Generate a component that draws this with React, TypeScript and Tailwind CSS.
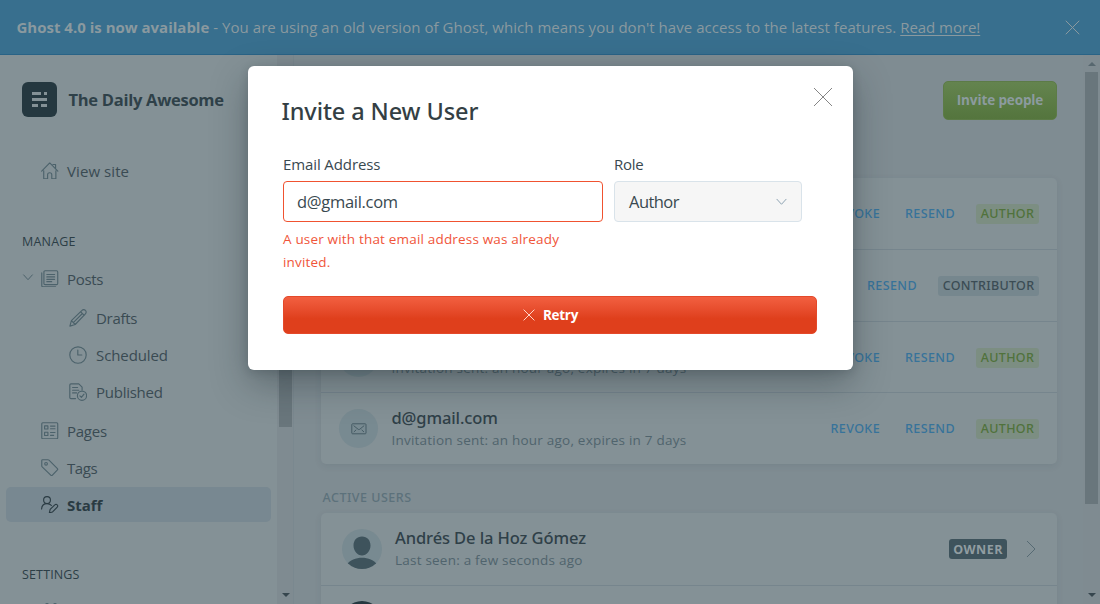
import type { ReactNode } from "react";

type IconProps = { className?: string };

const Icon = ({ size = "h-[17.5px] w-[17.5px]", children }: { size?: string; children: ReactNode }) => (
  <svg
    viewBox="0 0 18 18"
    fill="none"
    stroke="currentColor"
    strokeWidth="1.15"
    strokeLinecap="round"
    strokeLinejoin="round"
    className={`shrink-0 ${size}`}
  >
    {children}
  </svg>
);

const HomeIcon = () => (
  <Icon>
    <path d="M.7 9.4 9 1l8.3 8.4M12.3 2.6h2.7v4M2.8 9v8.300h4v-4.2c0-2.7 4.3-2.7 4.3 0v4.2h4.2V9" />
  </Icon>
);

const PostsIcon = () => (
  <Icon>
    <rect x="3" y=".8" width="14.2" height="14.2" rx="1.2" />
    <path d="M.8 3v13.2c0 .6.5 1 1 1H15M6 4.6h8M6 7.1h8M6 9.6h8M6 12h5" />
  </Icon>
);

const PencilIcon = () => (
  <Icon size="h-[18px] w-[18px]">
    <path d="M.9 17.1l1.5-5.4L13 1.4a2.3 2.3 0 0 1 3.4 0 2.3 2.3 0 0 1 0 3.4L6.2 15.5.9 17.1ZM2.4 11.7l3.8 3.8M11.6 2.7l3.6 3.6M13.4 4.5 4.3 13.6" />
  </Icon>
);

const ClockIcon = () => (
  <Icon size="h-[18px] w-[18px]">
    <circle cx="9" cy="9" r="8.2" />
    <path d="M8.8 4v5h4" />
  </Icon>
);

const PublishedIcon = () => (
  <Icon size="h-[18px] w-[18px]">
    <path d="M6.5 15.6H2a1.2 1.2 0 0 1-1.2-1.2V2A1.2 1.2 0 0 1 2 .8h7.8l3.3 3.3v2.8M3.6 4.5h5M3.6 7.2h6.2M3.6 9.9h4" />
    <circle cx="13" cy="12.7" r="4.6" />
    <path d="m10.9 12.8 1.5 1.6 2.6-3.2" />
  </Icon>
);

const PagesIcon = () => (
  <Icon>
    <rect x=".8" y=".8" width="16.4" height="16.4" rx="1" />
    <path d="M3.7 4h3.4v3.2H3.7zM3.7 10.6h3.4v3.3H3.7zM9.8 4.2h4.6M9.8 7h4.6M9.8 10.8h4.6M9.8 13.7h3.2" />
  </Icon>
);

const TagIcon = () => (
  <Icon>
    <path d="M.8 1.6c0-.5.3-.8.8-.8h5.6c.4 0 .7.1 1 .4l8.7 8.7c.4.4.4.8 0 1.2l-5.4 5.7c-.4.4-.8.4-1.2 0L1.2 8.1a1.3 1.3 0 0 1-.4-.9Z" />
    <circle cx="5.2" cy="5" r="1.4" />
  </Icon>
);

const StaffIcon = () => (
  <Icon>
    <circle cx="6.2" cy="4.2" r="3.5" />
    <path d="M.6 13.4c.2-3.7 2.5-5.6 5.6-5.6 2 0 3.5.7 4.5 2M8.6 17.3l.8-3.5 4.8-4.7a1.7 1.7 0 0 1 2.5 0c.7.7.7 1.7 0 2.4L11.9 16.4Z" />
  </Icon>
);

const MailIcon = () => (
  <svg viewBox="0 0 16 12" fill="none" stroke="currentColor" className="h-3 w-4">
    <rect x=".8" y=".8" width="14.2" height="10" rx=".8" />
    <path d="m2.6 2.6 4.6 3.7c.5.4 1 .4 1.500 0l4.500-3.700M2.800 9l2.400-2.200M13 9l-2.400-2.200" />
  </svg>
);

const Cross = ({ className = "" }: IconProps) => (
  <svg viewBox="0 0 20 20" fill="none" stroke="currentColor" className={className}>
    <path d="m1 1 18 18M19 1 1 19" vectorEffect="non-scaling-stroke" />
  </svg>
);

const ChevronDown = ({ className = "" }: IconProps) => (
  <svg viewBox="0 0 12 8" fill="none" stroke="currentColor" strokeLinecap="round" className={className}>
    <path d="m1 1 5 5.500L11 1" vectorEffect="non-scaling-stroke" />
  </svg>
);

const Triangle = ({ className = "" }: IconProps) => (
  <svg viewBox="0 0 8 4" fill="currentColor" className={`h-1 w-2 shrink-0 ${className}`}>
    <path d="M0 0h8L4 4z" />
  </svg>
);

const NavItem = ({ icon, label, spacing }: { icon: ReactNode; label: string; spacing: string }) => (
  <div className="flex h-[37px] items-center gap-[8.5px] pl-[41px]">
    <span className="flex text-[#4c626b]">{icon}</span>
    <span className={spacing}>{label}</span>
  </div>
);

const SubItem = ({ icon, label, spacing }: { icon: ReactNode; label: string; spacing: string }) => (
  <div className="flex h-[37px] items-center gap-[9px] pl-[69px]">
    <span className="flex text-[#4c626b]">{icon}</span>
    <span className={spacing}>{label}</span>
  </div>
);

const Sidebar = () => (
  <aside className="flex w-[294px] shrink-0 bg-[#849196]">
    <div className="w-[277px] overflow-hidden pt-[27px] text-[15px] leading-5 text-[#3a4b53]">
      <div className="flex items-center gap-[11.5px] pl-[22px]">
        <svg viewBox="0 0 35 35" className="h-[35px] w-[35px]">
          <rect width="35" height="35" rx="6" fill="#253840" />
          <path
            d="M10 10h9v3h-9zM22 10h3v3h-3zM10 16h15v3H10zM10 22h6v3h-6zM19 22h6v3h-6z"
            fill="#849196"
          />
        </svg>
        <span className="text-[16.5px] font-bold tracking-[-0.28px] text-[#2f4149]">The Daily Awesome</span>
      </div>
      <div className="mt-[35px]">
        <NavItem icon={<HomeIcon />} label="View site" spacing="tracking-[0.08px]" />
      </div>
      <div className="mt-[43px] pl-[22px] text-[12.5px] tracking-[0.2px] text-[#2c3e46]">MANAGE</div>
      <div className="relative mt-2">
        <ChevronDown className="absolute left-[22px] top-[14px] h-[7px] w-3 text-[#4c626b]" />
        <NavItem icon={<PostsIcon />} label="Posts" spacing="tracking-[-0.3px]" />
      </div>
      <div className="mt-0.5">
        <SubItem icon={<PencilIcon />} label="Drafts" spacing="tracking-[-0.3px]" />
        <SubItem icon={<ClockIcon />} label="Scheduled" spacing="tracking-[-0.1px]" />
        <SubItem icon={<PublishedIcon />} label="Published" spacing="tracking-[-0.25px]" />
      </div>
      <div className="mt-0.5">
        <NavItem icon={<PagesIcon />} label="Pages" spacing="tracking-[-0.25px]" />
        <NavItem icon={<TagIcon />} label="Tags" spacing="tracking-[-0.4px]" />
      </div>
      <div className="ml-1.5 mt-px flex h-[35px] w-[265px] items-center gap-[8.5px] rounded-[5px] bg-[#788891] pl-[35px] text-[#2a3b43]">
        <StaffIcon />
        <span className="font-bold">Staff</span>
      </div>
      <div className="mt-[43px] pl-[22px] text-[12.5px] tracking-[0.15px] text-[#2c3e46]">SETTINGS</div>
      <div className="mt-[18px] flex gap-1 pl-[45px]">
        <span className="h-1 w-1 rounded-full bg-[#4c626b]" />
        <span className="h-1 w-1 rounded-full bg-[#4c626b]" />
      </div>
    </div>
    <div className="flex w-4 flex-col items-center bg-[#7f8b91] pt-[17px]">
      <div className="ml-px h-[355px] w-[13px] bg-[#69767c]" />
      <Triangle className="mt-auto mb-[7px] ml-px text-[#36464e]" />
    </div>
    <div className="w-px bg-[#7a888f]" />
  </aside>
);

type Invite = { role: string; height: string };

const invites: Invite[] = [
  { role: "AUTHOR", height: "h-[72px]" },
  { role: "CONTRIBUTOR", height: "h-[72px]" },
  { role: "AUTHOR", height: "h-[71px]" },
  { role: "AUTHOR", height: "h-[71px]" },
];

const InviteRow = ({ role, height }: Invite) => (
  <div className={`flex items-center border-b border-[#76858d] pl-[18px] pr-[18px] last:border-b-0 ${height}`}>
    <div className="flex h-[39px] w-[39px] items-center justify-center rounded-full bg-[#788a91] text-[#455b64]">
      <MailIcon />
    </div>
    <div className="ml-[13.5px] grow">
      <div className="font-['Noto_Sans',sans-serif] text-[16.5px] font-medium leading-[22px] tracking-[-0.12px] text-[#2f4048]">
        d@gmail.com
      </div>
      <div className="text-[13.5px] leading-[22px] tracking-[0.22px] text-[#50646d]">
        Invitation sent: an hour ago, expires in 7 days
      </div>
    </div>
    <div className="flex items-center pt-[1.5px] font-['Noto_Sans',sans-serif] text-[12.5px] font-medium leading-5 text-[#37739a]">
      <span className="mr-[25px] tracking-[0.4px]">REVOKE</span>
      <span className="mr-[21px] tracking-[0.4px]">RESEND</span>
      {role === "AUTHOR" ? (
        <span className="h-5 w-[63px] rounded-[3px] bg-[#7c8e82] text-center tracking-[0.32px] text-[#50723b]">AUTHOR</span>
      ) : (
        <span className="h-5 w-[101px] rounded-[3px] bg-[#76878e] text-center tracking-[0.3px] text-[#3b4c54]">
          CONTRIBUTOR
        </span>
      )}
    </div>
  </div>
);

const Main = () => (
  <main className="flex grow bg-[#7f8c92]">
    <div className="flex w-[763px] flex-col pl-[27px] pt-[26px]">
      <button className="h-[39px] w-[114px] shrink-0 self-end rounded-[5px] border border-[#5c7b47] bg-linear-to-b from-[#64844f] to-[#54753d] text-[13.5px] font-bold tracking-[-0.12px] text-[#8c9b9f]">
        Invite people
      </button>
      <section className="mt-[58px] shrink-0 rounded-[5px] bg-[#849196] shadow-[0_2px_7px_rgba(35,55,70,0.09)]">
        {invites.map((invite, i) => (
          <InviteRow key={i} {...invite} />
        ))}
      </section>
      <h2 className="mt-6 shrink-0 pl-[1.5px] font-['Noto_Sans',sans-serif] text-[12.5px] font-medium leading-5 tracking-[0.5px] text-[#5c717b]">
        ACTIVE USERS
      </h2>
      <section className="mt-[5px] shrink-0 rounded-t-[5px] bg-[#849196] shadow-[0_2px_7px_rgba(35,55,70,0.09)]">
        <div className="flex h-[73px] items-center border-b border-[#76858d] pl-[21px] pr-[21px]">
          <svg viewBox="0 0 40 40" className="h-10 w-10">
            <defs>
              <clipPath id="avatar">
                <circle cx="20" cy="20" r="20" />
              </clipPath>
            </defs>
            <g clipPath="url(#avatar)">
              <rect width="40" height="40" fill="#788a91" />
              <path
                d="M20 7.5c5.2 0 8.5 3.800 8.500 9s-4 10-8.500 10-8.500-4.800-8.500-10 3.300-9 8.500-9ZM4 36.500c4-6 10-7.800 16-7.800s12 1.800 16 7.800V40H4Z"
                fill="#3e535c"
              />
            </g>
          </svg>
          <div className="ml-[13px] grow">
            <div className="font-['Noto_Sans',sans-serif] text-[16.5px] font-medium leading-[22px] tracking-[-0.1px] text-[#2f4048]">
              Andrés De la Hoz Gómez
            </div>
            <div className="text-[13.5px] leading-[22px] tracking-[0.22px] text-[#50646d]">
              Last seen: a few seconds ago
            </div>
          </div>
          <span className="h-5 w-[58px] rounded-[3px] bg-[#3e535c] pt-px text-center text-[12.5px] font-bold leading-5 tracking-[0.45px] text-[#919da1]">
            OWNER
          </span>
          <svg viewBox="0 0 10 18" fill="none" stroke="#566a73" className="ml-[19px] h-[18px] w-2.5">
            <path d="m1 1 8 8-8 8" />
          </svg>
        </div>
        <div className="flex h-[73px] items-start pl-[21px] pt-[15px]">
          <div className="h-10 w-10 shrink-0 rounded-full bg-[#253840]" />
          <div className="ml-[13px] font-['Noto_Sans',sans-serif] text-[16.5px] font-medium leading-[22px] text-[#2f4048]">
            ghost
          </div>
        </div>
      </section>
    </div>
    <div className="ml-auto flex w-[17px] flex-col items-center bg-[#7f8b91] pt-[7px]">
      <Triangle className="rotate-180 text-[#57676f]" />
      <div className="mt-1.5 h-[432px] w-[13px] bg-[#69767c]" />
      <Triangle className="mt-auto mb-[7px] text-[#36464e]" />
    </div>
  </main>
);

const InviteModal = () => (
  <div
    role="dialog"
    className="absolute left-[248px] top-[66px] h-[304px] w-[605px] rounded-[6px] bg-white pl-[35px] pr-9 pt-[30px] text-[#394950] shadow-[0_14px_36px_rgba(20,32,38,0.34),0_2px_10px_rgba(20,32,38,0.16)]"
  >
    <div className="flex items-start justify-between">
      <h1 className="ml-[-1.5px] font-['Noto_Sans',sans-serif] text-[23.5px] font-medium leading-[30px] tracking-[-0.1px] text-[#343f44]">
        Invite a New User
      </h1>
      <Cross className="-mr-4 mt-[-9px] h-5 w-5 text-[#858585]" />
    </div>
    <div className="mt-7 grid grid-cols-[320px_188px] gap-x-[11px] text-[15px] leading-5">
      <label className="tracking-[-0.11px]">Email Address</label>
      <label className="tracking-[-0.25px]">Role</label>
      <div className="mt-[7px] flex h-[41px] items-center rounded-[4px] border border-[#f05230] pl-[13px] text-[16.5px] tracking-[-0.3px]">
        d@gmail.com
      </div>
      <div className="mt-[7px] flex h-[41px] items-center justify-between rounded-[4px] border border-[#d9e3ea] bg-[#f6f6f6] pl-3.5 pr-[14px] text-[16.5px] tracking-[-0.55px]">
        Author
        <ChevronDown className="h-2 w-[11px] text-[#8fa4b3]" />
      </div>
      <p className="mt-1.5 text-[13.5px] leading-[23px] tracking-[0.18px] text-[#f0553a]">
        A user with that email address was already invited.
      </p>
    </div>
    <button className="mt-[22px] flex h-[38px] w-full items-center justify-center gap-2 rounded-[5px] border border-[#e4492a] bg-linear-to-b from-[#f25f40] to-[#df3f1c] to-60% pl-px text-[13.5px] font-bold tracking-[-0.3px] text-white">
      <Cross className="h-3 w-3 text-[#ffd5cb]" />
      Retry
    </button>
  </div>
);

export default function App() {
  return (
    <div className="relative flex h-[604px] w-[1100px] flex-col overflow-hidden font-['Open_Sans',sans-serif]">
      <header className="flex h-[55px] shrink-0 items-center justify-between border-b border-[#296386] bg-[#386f8e] pl-[16.5px] pr-5 text-[15px] text-[#8a999f]">
        <p className="whitespace-pre">
          <b>Ghost 4.0 is now available</b>
          <span className="tracking-[0.045px]">
            {" - You are using an old version of Ghost, which means you don't have access to the latest features. "}
          </span>
          <span className="tracking-[-0.05px] underline underline-offset-2">Read more!</span>
        </p>
        <Cross className="h-[15px] w-[15px]" />
      </header>
      <div className="flex min-h-0 grow">
        <Sidebar />
        <Main />
      </div>
      <InviteModal />
    </div>
  );
}
